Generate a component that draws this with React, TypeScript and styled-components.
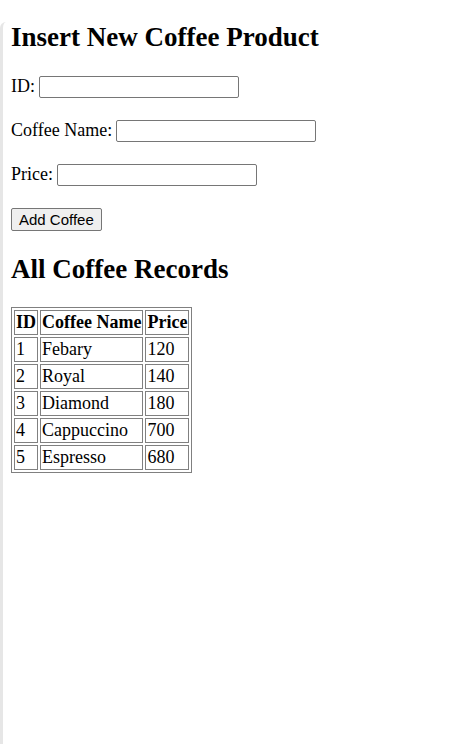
import styled, { createGlobalStyle } from 'styled-components';

const GlobalStyle = createGlobalStyle`
    html, body {
        margin: 0;
        background: #ffffff;
    }
    body {
        font-family: "Liberation Serif", "Times New Roman", serif;
        font-size: 18px;
        color: #000;
    }
`;

const Frame = styled.div`
    min-height: 744px;
    box-sizing: border-box;
    border-left: 3px solid #e6e6e6;
    border-top-left-radius: 6px;
    padding: 0 8px;
`;

const Title = styled.h1`
    font-size: 27px;
    font-weight: bold;
    margin: 22px 0 0;
    line-height: 30px;
`;

const Form = styled.form`
    display: flex;
    flex-direction: column;
    align-items: flex-start;
    gap: 21px;
    margin-top: 23px;
`;

const Field = styled.label`
    display: flex;
    align-items: center;
    gap: 4px;
    height: 23px;
`;

const TextInput = styled.input`
    width: 200px;
    height: 22px;
    box-sizing: border-box;
    border: 1px solid #767676;
    border-radius: 2px;
    padding: 1px 2px;
    font-size: 14px;
`;

const Button = styled.button`
    font-family: "Liberation Sans", Arial, sans-serif;
    font-size: 15px;
    height: 23px;
    padding: 1px 7px;
    margin-top: 1px;
    background: #efefef;
    border: 1px solid #767676;
    border-radius: 2px;
    color: #000;
`;

const SubTitle = styled.h2`
    font-size: 27px;
    font-weight: bold;
    margin: 23px 0 0;
    line-height: 30px;
`;

const Table = styled.table`
    margin-top: 23px;
    border: 1px solid #808080;
    border-spacing: 2px;
`;

const Cell = styled.td<{ $head?: boolean }>`
    border: 1px solid #808080;
    padding: 1px 1px;
    line-height: 21px;
    font-weight: ${p => (p.$head ? 'bold' : 'normal')};
`;

const coffees = [
    { id: 1, name: 'Febary', price: 120 },
    { id: 2, name: 'Royal', price: 140 },
    { id: 3, name: 'Diamond', price: 180 },
    { id: 4, name: 'Cappuccino', price: 700 },
    { id: 5, name: 'Espresso', price: 680 },
];

export default function App() {
    return (
        <>
            <GlobalStyle />
            <Frame>
                <Title>Insert New Coffee Product</Title>
                <Form onSubmit={e => e.preventDefault()}>
                    <Field>ID: <TextInput type="text" /></Field>
                    <Field>Coffee Name: <TextInput type="text" /></Field>
                    <Field>Price: <TextInput type="text" /></Field>
                    <Button type="submit">Add Coffee</Button>
                </Form>
                <SubTitle>All Coffee Records</SubTitle>
                <Table>
                    <tbody>
                        <tr>
                            <Cell $head>ID</Cell>
                            <Cell $head>Coffee Name</Cell>
                            <Cell $head>Price</Cell>
                        </tr>
                        {coffees.map(c => (
                            <tr key={c.id}>
                                <Cell>{c.id}</Cell>
                                <Cell>{c.name}</Cell>
                                <Cell>{c.price}</Cell>
                            </tr>
                        ))}
                    </tbody>
                </Table>
            </Frame>
        </>
    );
}
